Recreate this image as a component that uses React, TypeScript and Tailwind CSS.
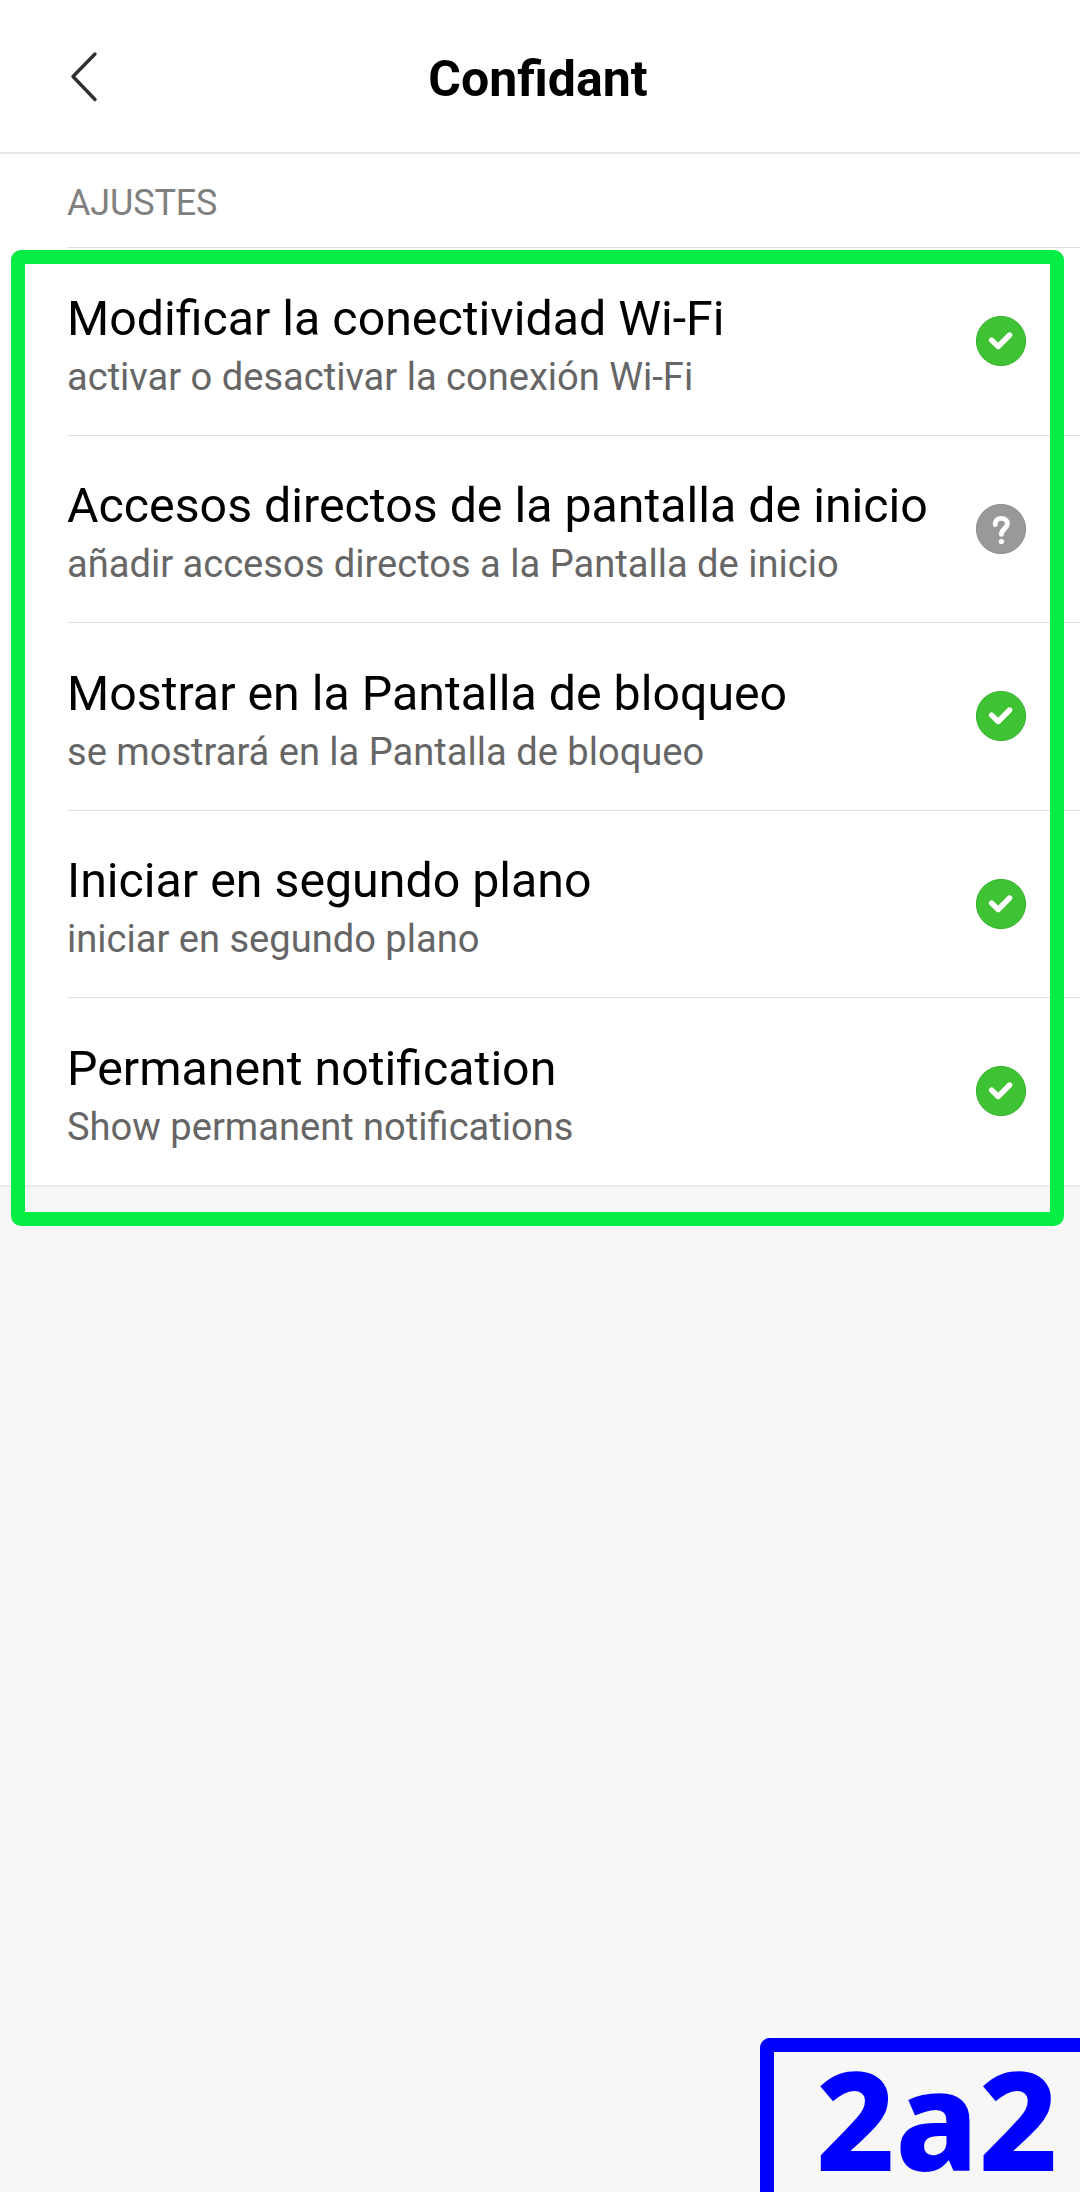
type Status = "granted" | "ask";

const permissions: { title: string; detail: string; status: Status }[] = [
  { title: "Modificar la conectividad Wi-Fi", detail: "activar o desactivar la conexión Wi-Fi", status: "granted" },
  { title: "Accesos directos de la pantalla de inicio", detail: "añadir accesos directos a la Pantalla de inicio", status: "ask" },
  { title: "Mostrar en la Pantalla de bloqueo", detail: "se mostrará en la Pantalla de bloqueo", status: "granted" },
  { title: "Iniciar en segundo plano", detail: "iniciar en segundo plano", status: "granted" },
  { title: "Permanent notification", detail: "Show permanent notifications", status: "granted" },
];

function StatusIcon({ status }: { status: Status }) {
  if (status === "granted") {
    return (
      <svg className="size-[52px] shrink-0" viewBox="0 0 52 52" fill="none">
        <circle cx="26" cy="26" r="24.6" fill="#3fc234" stroke="#37b22d" strokeWidth="1" />
        <path d="M16.6 25.1 L23.2 31.5 L34.6 20" stroke="#fff" strokeWidth="5.4" strokeLinecap="round" strokeLinejoin="round" />
      </svg>
    );
  }
  return (
    <svg className="size-[52px] shrink-0" viewBox="0 0 52 52" fill="none">
      <circle cx="26" cy="26" r="24.6" fill="#999" stroke="#8c8c8c" strokeWidth="1" />
      <path d="M20.2 21.6 C20 17.6 22.6 15.4 26.2 15.4 C29.8 15.4 32.4 17.6 32.4 20.8 C32.4 25.4 26.4 26 26.4 31.4" stroke="#fff" strokeWidth="4.9" strokeLinecap="round" strokeLinejoin="round" />
      <circle cx="26.4" cy="38.6" r="2.7" fill="#fff" />
    </svg>
  );
}

export default function App() {
  return (
    <div className="relative h-[2192px] w-[1080px] overflow-hidden bg-[#f7f7f7] font-['Roboto',sans-serif]">
      <header className="grid h-[154px] grid-cols-[1fr_auto_1fr] items-center border-b-2 border-[#e4e4e4] bg-white">
        <svg className="ml-[68px] h-[52px] w-[32px]" viewBox="0 0 32 52" fill="none">
          <path d="M27 4 L5 26.5 L27 49.5" stroke="#303030" strokeWidth="3.4" strokeLinecap="round" strokeLinejoin="round" />
        </svg>
        <h1 className="pt-[5px] pr-[4px] text-[50px] leading-[60px] font-bold text-black">Confidant</h1>
      </header>
      <main className="border-b-2 border-[#ebebeb] bg-white">
        <h2 className="h-[93px] pt-[27px] pl-[67px] text-[36px] leading-[44px] tracking-[-0.15px] text-[#808080]">AJUSTES</h2>
        <ul className="pl-[67px]">
          {permissions.map((p) => (
            <li key={p.title} className="flex h-[187.5px] items-center justify-between border-t-[1.5px] border-[#dfdfe1] pr-[53px]">
              <div className="pt-[13px] whitespace-nowrap">
                <p className="text-[48.3px] leading-[58px] text-black">{p.title}</p>
                <p className="text-[38.1px] leading-[58px] text-[#666]">{p.detail}</p>
              </div>
              <StatusIcon status={p.status} />
            </li>
          ))}
        </ul>
      </main>
      <div className="absolute top-[250px] left-[11px] h-[976px] w-[1053px] rounded-[10px] border-[14px] border-[#06ed44]" />
      <div className="absolute top-[2038px] left-[760px] h-[154px] w-[320px] rounded-tl-[10px] border-t-[14px] border-l-[14px] border-[#00f] pt-[1px] pl-[42px] font-['Noto_Sans','Open_Sans',sans-serif] text-[137px] leading-[130px] font-extrabold text-[#00f]">
        2a2
      </div>
    </div>
  );
}
